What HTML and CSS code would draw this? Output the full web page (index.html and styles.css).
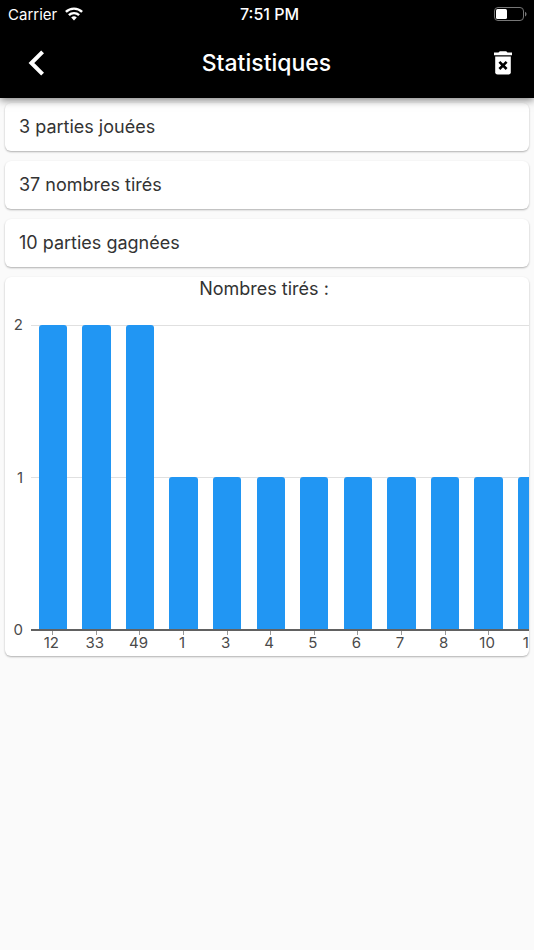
FILE: index.html
```html
<!DOCTYPE html>
<html lang="fr">
<head>
    <meta charset="UTF-8">
    <meta name="viewport" content="width=device-width, initial-scale=1.0">
    <title>Statistiques</title>
    <link rel="stylesheet" href="styles.css">
</head>
<body>
    <header class="header">
        <!-- Status bar -->
        <div class="status-bar">
            <div class="carrier">
                <span>Carrier</span>
                <svg width="18" height="14" viewBox="0 0 18 14" fill="none" stroke="#fff" stroke-width="2.4">
                    <path d="M0.9 4.9a11.6 11.6 0 0 1 16.2 0"/>
                    <path d="M3.9 8.2a7.2 7.2 0 0 1 10.2 0"/>
                    <path d="M9 13.6l-2.8-3a4 4 0 0 1 5.6 0z" fill="#fff" stroke="none"/>
                </svg>
            </div>
            <div class="clock">7:51 PM</div>
            <div class="battery">
                <svg width="33" height="14" viewBox="0 0 33 14">
                    <rect x="0.5" y="0.5" width="29" height="13" rx="3.5" fill="none" stroke="#777"/>
                    <rect x="2" y="2" width="11" height="10" rx="1.5" fill="#fff"/>
                    <path d="M31 4.8v4.6c2-.8 2-3.8 0-4.6z" fill="#777"/>
                </svg>
            </div>
        </div>

        <!-- App bar -->
        <div class="app-bar">
            <button class="icon-button" aria-label="Retour">
                <svg width="16" height="26" viewBox="0 0 16 26" fill="none" stroke="#fff" stroke-width="4">
                    <path d="M14.6 1.8L3.4 13l11.2 11.2"/>
                </svg>
            </button>
            <h1>Statistiques</h1>
            <button class="icon-button" aria-label="Supprimer">
                <svg width="18" height="24" viewBox="0 0 18 24">
                    <path d="M0 1.5h4.5l1.3-1.3h6.4l1.3 1.3H18V4.2H0z" fill="#fff"/>
                    <path d="M1.2 5.4h15.6v15.8a2.4 2.4 0 0 1-2.4 2.4H3.6a2.4 2.4 0 0 1-2.4-2.4z" fill="#fff"/>
                    <path d="M5.4 10.8l7.2 7.2M12.6 10.8l-7.2 7.2" stroke="#000" stroke-width="2.6"/>
                </svg>
            </button>
        </div>
    </header>

    <main class="content">
        <div class="card stat">3 parties jouées</div>
        <div class="card stat">37 nombres tirés</div>
        <div class="card stat">10 parties gagnées</div>

        <!-- Chart Section -->
        <section class="card chart">
            <h2>Nombres tirés :</h2>
            <div class="chart-body">
                <div class="y-axis">
                    <span>2</span>
                    <span>1</span>
                    <span>0</span>
                </div>
                <div class="plot">
                    <div class="bars" id="bars"></div>
                    <div class="x-axis" id="labels"></div>
                </div>
            </div>
        </section>
    </main>

    <script>
        const draws = [[12, 2], [33, 2], [49, 2], [1, 1], [3, 1], [4, 1], [5, 1], [6, 1], [7, 1], [8, 1], [10, 1], [14, 1]];
        const maxCount = 2;
        const bars = document.getElementById("bars");
        const labels = document.getElementById("labels");

        draws.forEach(([number, count]) => {
            const bar = document.createElement("div");
            bar.className = "bar";
            bar.style.height = `${count / maxCount * 100}%`;
            bars.appendChild(bar);

            const label = document.createElement("span");
            label.textContent = number;
            labels.appendChild(label);
        });
    </script>
</body>
</html>
```
FILE: styles.css
```css
body {
    margin: 0;
    min-height: 100vh;
    background-color: #fafafa;
    color: #333;
    font-family: Inter, "Liberation Sans", sans-serif;
}
.header {
    position: relative;
    background-color: #000;
    color: #fff;
    box-shadow: 0 2px 8px rgba(0, 0, 0, 0.5);
}
.status-bar {
    display: grid;
    grid-template-columns: 1fr auto 1fr;
    align-items: center;
    height: 28px;
    padding: 0 7px 0 8px;
    font-size: 15px;
}
.carrier {
    display: flex;
    align-items: center;
    gap: 8px;
}
.clock {
    padding-left: 4px;
    font-size: 16px;
    font-weight: 500;
}
.battery {
    display: flex;
    justify-content: flex-end;
}
.app-bar {
    display: grid;
    grid-template-columns: 48px 1fr 48px;
    align-items: center;
    height: 70px;
    padding: 0 7px 0 12px;
}
.app-bar h1 {
    margin: 0;
    padding-right: 6px;
    font-size: 23px;
    font-weight: 500;
    text-align: center;
}
.icon-button {
    display: flex;
    align-items: center;
    justify-content: center;
    width: 48px;
    height: 48px;
    padding: 0;
    border: none;
    background: none;
    cursor: pointer;
}
.content {
    display: flex;
    flex-direction: column;
    gap: 10px;
    padding: 5px;
}
.card {
    overflow: hidden;
    border-radius: 6px;
    background-color: #fff;
    box-shadow: 0 1px 2px rgba(0, 0, 0, 0.3);
}
.stat {
    padding: 12px 14px;
    font-size: 18px;
    line-height: 24px;
}
.chart h2 {
    margin: 0;
    padding-right: 6px;
    font-size: 18px;
    font-weight: 400;
    line-height: 24px;
    text-align: center;
}
.chart-body {
    display: grid;
    grid-template-columns: 26px minmax(0, 1fr);
    padding-top: 24px;
    color: #4a4a4a;
    font-size: 15px;
    line-height: 16px;
}
.y-axis {
    display: flex;
    flex-direction: column;
    justify-content: space-between;
    height: 321px;
    margin-top: -8px;
    padding-right: 8px;
    text-align: right;
}
.plot {
    overflow: hidden;
    background-image: linear-gradient(#e0e0e0, #e0e0e0), linear-gradient(#e0e0e0, #e0e0e0);
    background-position: 0 0, 0 152px;
    background-repeat: no-repeat;
    background-size: 100% 1px;
}
.bars, .x-axis {
    display: grid;
    grid-template-columns: repeat(12, 1fr);
    width: 523px;
}
.bars {
    align-items: end;
    justify-items: center;
    height: 304px;
    border-bottom: 2px solid #616161;
}
.bar {
    width: 65%;
    border-radius: 3px 3px 0 0;
    background-color: #2196f3;
}
.x-axis {
    height: 25px;
}
.x-axis span {
    padding: 4px 3px 0 0;
    background: linear-gradient(#999, #999) center top / 1px 4px no-repeat;
    text-align: center;
}
```
